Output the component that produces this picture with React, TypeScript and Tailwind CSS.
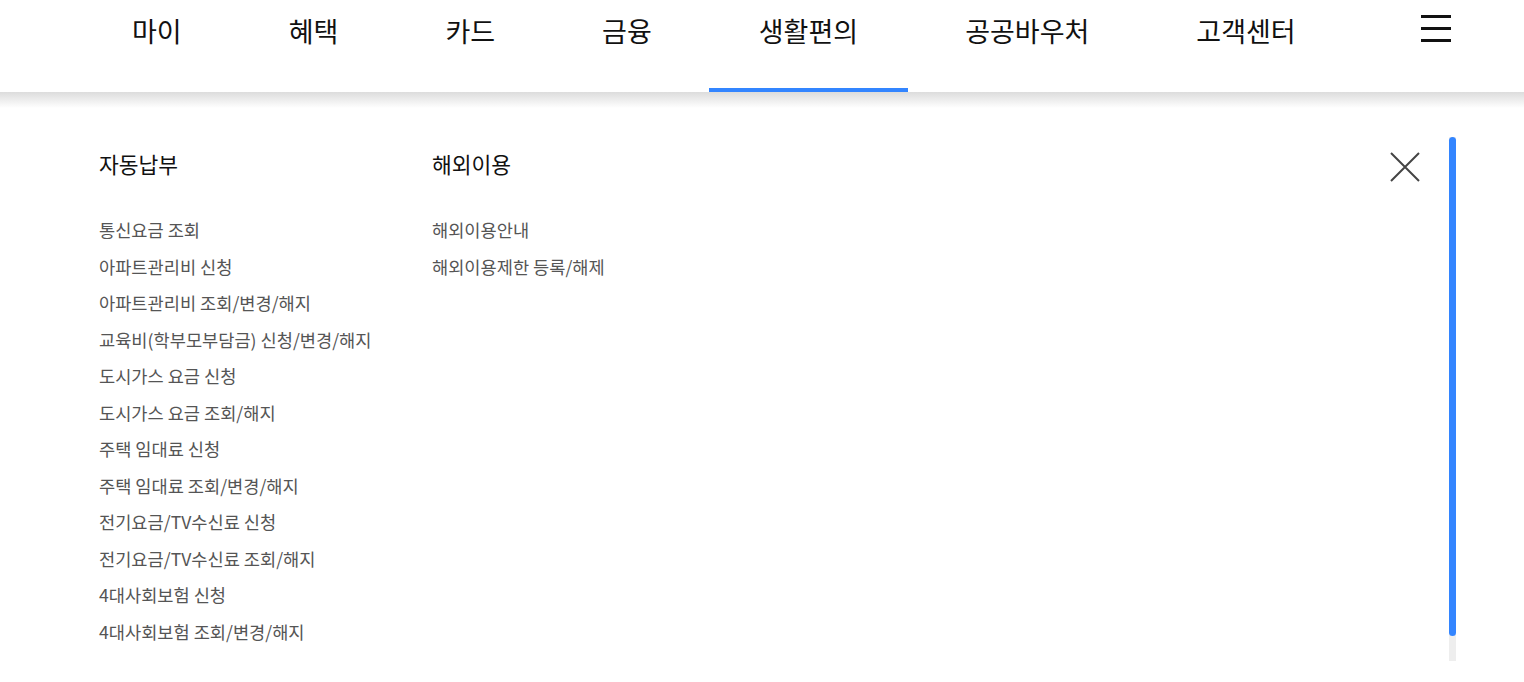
import React from 'react';

const navItems = ['마이', '혜택', '카드', '금융', '생활편의', '공공바우처', '고객센터'];

const autoPay = [
  '통신요금 조회',
  '아파트관리비 신청',
  '아파트관리비 조회/변경/해지',
  '교육비(학부모부담금) 신청/변경/해지',
  '도시가스 요금 신청',
  '도시가스 요금 조회/해지',
  '주택 임대료 신청',
  '주택 임대료 조회/변경/해지',
  '전기요금/TV수신료 신청',
  '전기요금/TV수신료 조회/해지',
  '4대사회보험 신청',
  '4대사회보험 조회/변경/해지',
];

const overseas = ['해외이용안내', '해외이용제한 등록/해제'];

const MenuColumn = ({ title, items, width }: { title: string; items: string[]; width: string }) => (
  <div className={width}>
    <h3 className="text-[21.5px] leading-[30px] font-normal text-[#111]">{title}</h3>
    <ul className="mt-[33px]">
      {items.map((item) => (
        <li key={item} className="text-[17.6px] leading-[36.5px] text-[#555] whitespace-nowrap">
          {item}
        </li>
      ))}
    </ul>
  </div>
);

const App = () => {
  return (
    <div
      className="w-[1524px] h-[682px] bg-white overflow-hidden"
      style={{ fontFamily: '"Noto Sans CJK KR", "Noto Sans", sans-serif' }}
    >
      {/* top nav */}
      <header className="h-[92px] flex pl-[82px] pr-[73px]">
        <nav className="flex gap-[7px]">
          {navItems.map((label) => {
            const active = label === '생활편의';
            return (
              <div
                key={label}
                className={`relative h-[92px] px-[50px] pt-[11px] text-[27px] leading-[40px] text-[#111] whitespace-nowrap ${
                  active ? 'border-b-4 border-[#3385ff]' : ''
                }`}
              >
                {label}
              </div>
            );
          })}
        </nav>
        <button className="ml-auto mt-[15px] flex flex-col gap-[9px] h-fit" aria-label="전체메뉴">
          <span className="block w-[30px] h-[3px] bg-[#111]" />
          <span className="block w-[30px] h-[3px] bg-[#111]" />
          <span className="block w-[30px] h-[3px] bg-[#111]" />
        </button>
      </header>
      <div className="h-[16px] bg-gradient-to-b from-[#dcdcdc] to-white" />

      {/* dropdown panel */}
      <section className="flex pl-[99px]">
        <div className="flex flex-1 pt-[41px]">
          <MenuColumn title="자동납부" items={autoPay} width="w-[333px]" />
          <MenuColumn title="해외이용" items={overseas} width="flex-1" />
        </div>
        <button className="mt-[44px] w-[30px] h-[30px] shrink-0" aria-label="닫기">
          <svg viewBox="0 0 30 30" className="w-[30px] h-[30px]" fill="none" stroke="#444" strokeWidth="2">
            <path d="M1 1L29 29M29 1L1 29" />
          </svg>
        </button>
        <div className="ml-[29px] mr-[68px] mt-[29px] w-[7px] h-[524px] bg-[#eeeeee] shrink-0">
          <div className="w-[7px] h-[499px] bg-[#3385ff] rounded-full" />
        </div>
      </section>
    </div>
  );
};

export default App;
